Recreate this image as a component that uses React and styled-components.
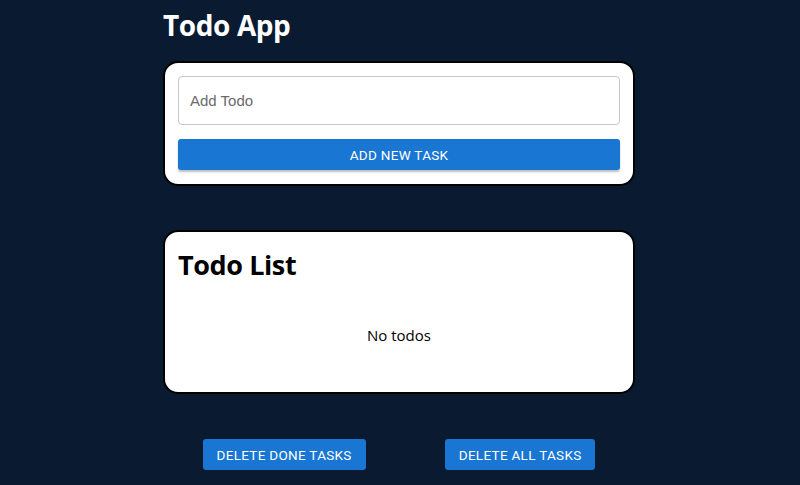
import React from "react"
import styled, { createGlobalStyle } from "styled-components"

const GlobalStyle = createGlobalStyle`
	html, body {
		margin: 0;
		padding: 0;
		background-color: #0a1a30;
		font-family: "Open Sans", "Noto Sans", sans-serif;
	}
`

const Page = styled.div`
	width: 472px;
	margin: 0 auto;
	padding-right: 2px;
	display: flex;
	flex-direction: column;
`

const Title = styled.h1`
	margin: 6px 0 17px;
	color: #fff;
	font-size: 28px;
	line-height: 38px;
	font-weight: 700;
	font-family: "Open Sans", "Noto Sans", sans-serif;
	letter-spacing: -0.4px;
`

const Card = styled.div`
	background: #fff;
	border: 2px solid #000;
	border-radius: 15px;
	padding: ${props => props.padding};
	margin-bottom: ${props => props.gap || "45px"};
	min-height: ${props => props.minHeight || "auto"};
	box-sizing: border-box;
`

const Form = styled.form`
	display: flex;
	flex-direction: column;
	gap: 14px;
`

const Input = styled.input`
	height: 49px;
	box-sizing: border-box;
	border: 1px solid #c8c8c8;
	border-radius: 4px;
	padding: 0 11px;
	font-size: 15px;
	font-family: "Liberation Sans", Arial, sans-serif;
	color: #333;
	outline: none;
	&::placeholder {
		color: #6b6b6b;
	}
`

const Button = styled.button`
	height: 31px;
	padding: 0 ${props => props.pad || "16px"};
	border: none;
	border-radius: 3px;
	background: #1976d2;
	color: #fff;
	font-family: Roboto, "Liberation Sans", sans-serif;
	font-size: 13.5px;
	font-weight: 400;
	letter-spacing: 0.3px;
	text-transform: uppercase;
	box-shadow: 0 2px 2px rgba(0, 0, 0, 0.25);
	cursor: pointer;
`

const ListTitle = styled.h2`
	margin: 0;
	font-size: 27px;
	line-height: 36px;
	font-weight: 700;
	color: #000;
	letter-spacing: -0.4px;
`

const Empty = styled.div`
	text-align: center;
	font-size: 15px;
	color: #000;
	margin-top: 42px;
`

const Footer = styled.div`
	display: flex;
	justify-content: space-around;
`

class App extends React.PureComponent {
	state = { todo: "" }

	handleSubmit = e => {
		e.preventDefault()
	}

	handleChange = ({ target: { value } }) => this.setState({ todo: value })

	render() {
		const { todo } = this.state

		return (
			<>
				<GlobalStyle />
				<Page>
					<Title>Todo App</Title>
					<Card padding="13px 13px 14px" gap="44px">
						<Form onSubmit={this.handleSubmit}>
							<Input type="text" placeholder="Add Todo" value={todo} onChange={this.handleChange} />
							<Button type="submit">Add New Task</Button>
						</Form>
					</Card>
					<Card padding="15px 13px 13px" minHeight="164px">
						<ListTitle>Todo List</ListTitle>
						<Empty>No todos</Empty>
					</Card>
					<Footer>
						<Button pad="14px">Delete Done Tasks</Button>
						<Button pad="14px">Delete All Tasks</Button>
					</Footer>
				</Page>
			</>
		)
	}
}

export default App
